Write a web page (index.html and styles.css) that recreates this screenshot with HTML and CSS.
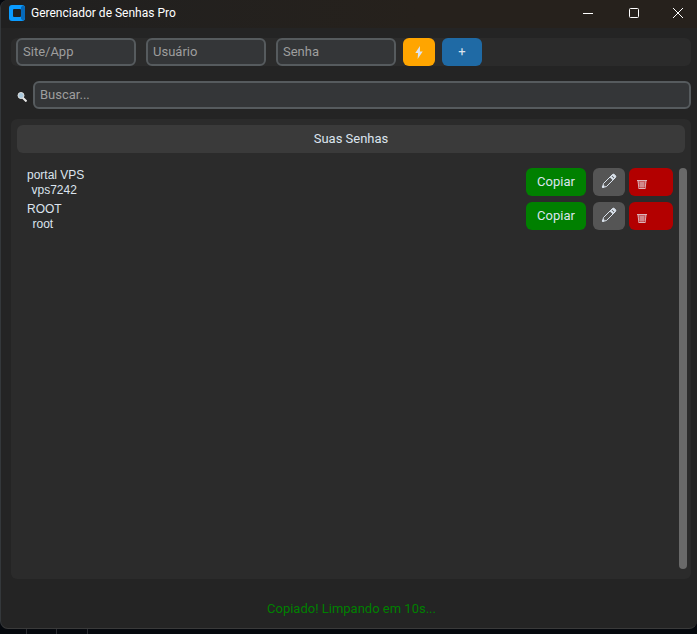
FILE: index.html
```html
<!DOCTYPE html>
<html lang="pt-BR">
<head>
    <meta charset="UTF-8">
    <meta name="viewport" content="width=device-width, initial-scale=1.0">
    <title>Gerenciador de Senhas Pro</title>
    <link rel="stylesheet" href="styles.css">
</head>
<body>
    <div class="window">
        <header class="titlebar">
            <svg class="logo" viewBox="0 0 16 16" aria-hidden="true">
                <rect width="16" height="16" rx="3" fill="#0a9bff"/>
                <path fill="#0668b8" d="M12 2l2-1.500q2 .5 2 2.500v10q0 2-2 2.500L12 14z"/>
                <rect x="4" y="4" width="8" height="8" rx="1" fill="#202020"/>
            </svg>
            <h1>Gerenciador de Senhas Pro</h1>
            <div class="window-controls">
                <button type="button" aria-label="Minimizar">
                    <svg viewBox="0 0 12 12"><path d="M1 6.5h10"/></svg>
                </button>
                <button type="button" aria-label="Maximizar">
                    <svg viewBox="0 0 12 12"><rect x="1.5" y="1.5" width="9" height="9" rx="1"/></svg>
                </button>
                <button type="button" aria-label="Fechar">
                    <svg viewBox="0 0 12 12"><path d="M1 1l10 10M11 1L1 11"/></svg>
                </button>
            </div>
        </header>

        <main>
            <form class="add-form">
                <input type="text" class="field" placeholder="Site/App" aria-label="Site/App">
                <input type="text" class="field" placeholder="Usuário" aria-label="Usuário">
                <input type="password" class="field" placeholder="Senha" aria-label="Senha">
                <button type="button" class="btn btn-generate" aria-label="Gerar senha">
                    <svg viewBox="0 0 8 14"><path d="M5 0L0 7.500h3L2.500 14 8 6H5z"/></svg>
                </button>
                <button type="button" class="btn btn-add">+</button>
            </form>

            <div class="search">
                <label for="busca" aria-label="Buscar">
                    <svg viewBox="0 0 10 10"><path stroke="#e8e8e8" stroke-width="2" d="M5.5 5.5L9.500 9.500"/><circle cx="4" cy="3.500" r="3" fill="#a9c8dc" stroke="#dedede"/></svg>
                </label>
                <input type="text" id="busca" class="field" placeholder="Buscar...">
            </div>

            <section class="panel">
                <h2>Suas Senhas</h2>
                <div class="panel-body">
                    <ul class="entries">
                        <li class="entry">
                            <p class="entry-text"><span>portal VPS</span><span>vps7242</span></p>
                            <button type="button" class="btn btn-copy">Copiar</button>
                            <button type="button" class="btn btn-edit" aria-label="Editar">
                                <svg viewBox="0 0 16 16"><path d="M1.5 14.5l1-4L11 2q1.500-1.500 3 0t0 3l-8.500 8.500z"/><path class="thick" d="M9.500 3.500l3 3M11.500 1.500l3 3M1.500 14.500l1.500-2"/></svg>
                            </button>
                            <button type="button" class="btn btn-delete" aria-label="Excluir">
                                <svg viewBox="0 0 10 11"><path d="M0 1.500h10M1 3h8M2 5h6M2 7h6M2 9.500h6M1 2l1 8M9 2L8 10M4 3v7M6 3v7"/></svg>
                            </button>
                        </li>
                        <li class="entry">
                            <p class="entry-text"><span>ROOT</span><span>root</span></p>
                            <button type="button" class="btn btn-copy">Copiar</button>
                            <button type="button" class="btn btn-edit" aria-label="Editar">
                                <svg viewBox="0 0 16 16"><path d="M1.5 14.5l1-4L11 2q1.500-1.500 3 0t0 3l-8.500 8.500z"/><path class="thick" d="M9.500 3.500l3 3M11.500 1.500l3 3M1.500 14.500l1.500-2"/></svg>
                            </button>
                            <button type="button" class="btn btn-delete" aria-label="Excluir">
                                <svg viewBox="0 0 10 11"><path d="M0 1.500h10M1 3h8M2 5h6M2 7h6M2 9.500h6M1 2l1 8M9 2L8 10M4 3v7M6 3v7"/></svg>
                            </button>
                        </li>
                    </ul>
                    <div class="scrollbar"></div>
                </div>
            </section>
        </main>

        <p class="status" role="status">Copiado! Limpando em 10s...</p>
    </div>
</body>
</html>
```
FILE: styles.css
```css
* {
    box-sizing: border-box;
}

body {
    margin: 0;
    height: 100vh;
    padding-bottom: 5px;
    background:
        linear-gradient(#2a2c30, #2a2c30) 26px 100% / 1px 5px no-repeat,
        linear-gradient(#2a2c30, #2a2c30) 56px 100% / 1px 5px no-repeat,
        linear-gradient(#2a2c30, #2a2c30) 87px 100% / 1px 5px no-repeat,
        #05080d;
    color: #dce4ee;
    font-family: Roboto, sans-serif;
    font-size: 13px;
}

h1, h2, p, ul {
    margin: 0;
    padding: 0;
    font-weight: normal;
}

svg {
    display: block;
    fill: none;
}

.window {
    display: flex;
    flex-direction: column;
    height: 100%;
    background-color: #242424;
    border-left: 1px solid #34383b;
    border-bottom: 1px solid #3a3a3a;
    border-radius: 8px 0 8px 8px;
    overflow: hidden;
}

/* Title bar */
.titlebar {
    display: flex;
    align-items: center;
    height: 28px;
    padding: 0 0 3px 8px;
    background: linear-gradient(90deg, #202020, #26211c 60%);
}

.logo {
    width: 16px;
    height: 16px;
}

.titlebar h1 {
    margin-left: 6px;
    color: #fff;
    font-size: 12px;
}

.window-controls {
    display: flex;
    margin-left: auto;
}

.window-controls button {
    display: grid;
    place-items: center;
    width: 46px;
    height: 24px;
    padding: 0;
    border: 0;
    background: none;
}

.window-controls button:last-child {
    width: 40px;
    padding-left: 2px;
}

.window-controls svg {
    width: 12px;
    height: 12px;
    stroke: #fff;
}

main {
    display: flex;
    flex: 1;
    flex-direction: column;
    padding: 10px 6px 0 10px;
}

.field {
    width: 120px;
    height: 28px;
    padding: 0 5px 2px;
    border: 2px solid #565b5e;
    border-radius: 6px;
    background-color: #343638;
    color: #dce4ee;
    font: inherit;
}

.field::placeholder {
    color: #9e9e9e;
    opacity: 1;
}

.btn {
    display: flex;
    align-items: center;
    justify-content: center;
    height: 28px;
    padding: 0 0 2px;
    border: 0;
    border-radius: 6px;
    color: #dce4ee;
    font: inherit;
}

/* New password form */
.add-form {
    display: flex;
    gap: 10px;
    padding-left: 5px;
    border-radius: 6px;
    background-color: #2b2b2b;
}

.btn-generate {
    width: 32px;
    margin-left: -3px;
    padding: 0;
    background-color: #ffa500;
}

.btn-generate svg {
    width: 8px;
    height: 13px;
    fill: #dce4ee;
}

.btn-add {
    width: 40px;
    margin-left: -3px;
    background-color: #1f6aa5;
}

.search {
    display: flex;
    align-items: center;
    gap: 6px;
    margin: 15px 0 10px;
    padding-left: 6px;
}

.search svg {
    width: 10px;
    height: 10px;
    margin-top: 3px;
}

.search .field {
    flex: 1;
}

/* Password list */
.panel {
    display: flex;
    flex: 1;
    flex-direction: column;
    padding: 6px;
    border-radius: 6px;
    background-color: #2b2b2b;
}

.panel h2 {
    border-radius: 6px;
    background-color: #3a3a3a;
    font-size: 13px;
    line-height: 28px;
    text-align: center;
}

.panel-body {
    display: flex;
    flex: 1;
    gap: 6px;
    margin: 15px -2px 4px 10px;
}

.entries {
    flex: 1;
    list-style: none;
}

.entry {
    display: flex;
    align-items: center;
    gap: 4px;
    margin-bottom: 6px;
}

.entry-text {
    height: 28px;
    margin-right: auto;
    font-family: "Liberation Sans", Arial, sans-serif;
    font-size: 12px;
    line-height: 15px;
    text-align: center;
}

.entry-text span {
    display: block;
}

.entry-text span:last-child {
    padding-right: 3px;
}

.btn-copy {
    width: 60px;
    margin-right: 3px;
    background-color: #008000;
}

.btn-edit {
    width: 32px;
    background-color: #555;
}

.btn-edit svg {
    width: 16px;
    height: 16px;
    stroke: #dce4ee;
}

.btn-edit .thick {
    stroke-width: 2;
}

.btn-delete {
    justify-content: flex-start;
    width: 44px;
    padding: 4px 0 0 8px;
    background-color: #b30000;
}

.btn-delete svg {
    width: 10px;
    height: 11px;
    stroke: #dcb4ba;
}

.scrollbar {
    width: 8px;
    border-radius: 4px;
    background-color: #696969;
}

.status {
    padding: 20px 0 9px 5px;
    color: #008000;
    line-height: 20px;
    text-align: center;
}
```
